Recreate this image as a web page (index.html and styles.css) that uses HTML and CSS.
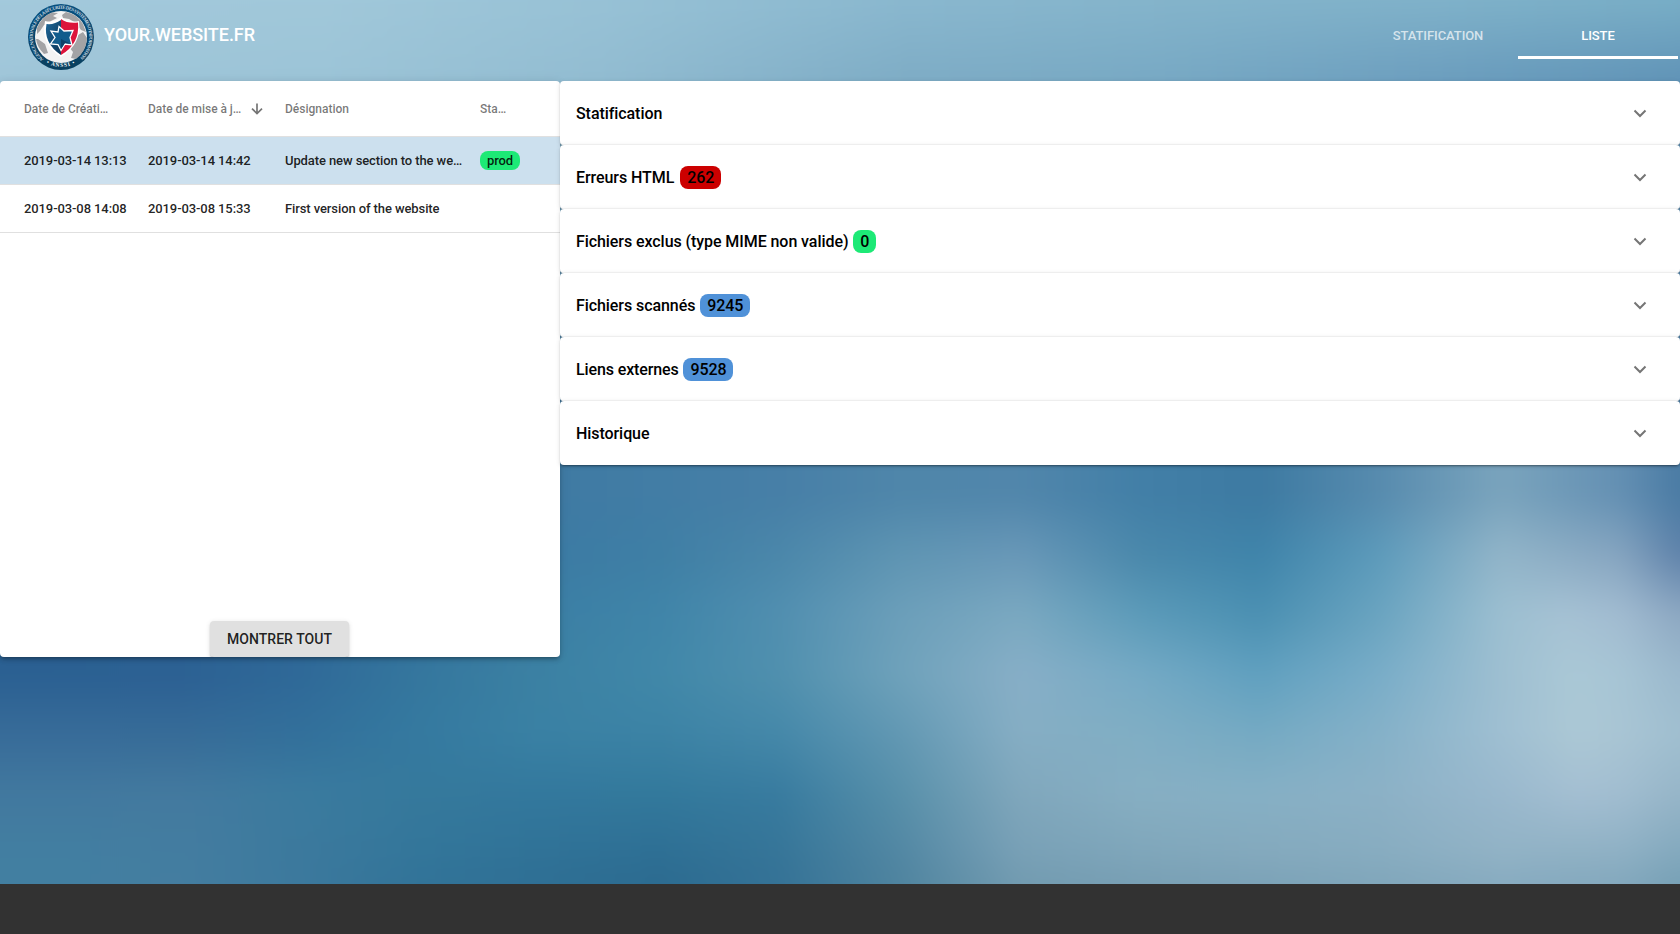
FILE: index.html
```html
<!DOCTYPE html>
<html lang="fr">
<head>
<meta charset="utf-8">
<title>YOUR.WEBSITE.FR</title>
<link rel="stylesheet" href="styles.css">
</head>
<body>
<div class="page">
  <div class="backdrop" aria-hidden="true">
    <div class="band band-0"></div>
    <div class="band band-1"></div>
    <div class="band band-2"></div>
    <div class="band band-3"></div>
    <div class="band band-4"></div>
    <div class="band band-5"></div>
    <div class="band band-6"></div>
    <div class="band band-7"></div>
    <div class="band band-8"></div>
    <div class="band band-9"></div>
  </div>
  <header class="topbar">
    <svg class="logo" viewBox="0 0 66 66" width="66" height="66">
      <defs>
        <path id="ring-top" d="M15.6 55.2A28.2 28.2 0 1 1 50.4 55.2"/>
        <path id="ring-bottom" d="M12 54.6A30.6 30.6 0 0 0 54 54.6"/>
        <linearGradient id="blue" x1="0" y1="0" x2="1" y2="1"><stop offset="0" stop-color="#1d6698"/><stop offset="1" stop-color="#0b3556"/></linearGradient>
        <linearGradient id="ring" x1="0" y1="0" x2="0" y2="1"><stop offset="0" stop-color="#07507e"/><stop offset="1" stop-color="#093f5e"/></linearGradient>
      </defs>
      <circle cx="33" cy="33" r="33" fill="url(#ring)"/>
      <circle cx="33" cy="33" r="26" fill="#f3f3f3"/>
      <path fill="#a3a3a5" d="M9 24Q14 12 24 8.500L30 9 25 12 29 14 23 17 20 21 16 21 12 27 9 30ZM38 8Q49 10 55 20L58 28 53 26 48 19 41 15 35 14 34 11ZM42 36L55 28 59 34Q58 48 48 55L43 54 45 48 41 43ZM10 35L17 40 20 49 16 50Q9 43 8 35Z"/>
      <path fill="#fff" d="M17 17Q26 19 33 13Q40 19 51 17Q54 40 33 53Q12 40 17 17Z"/>
      <path fill="url(#blue)" d="M18.500 20Q26 21 33 16L33 51Q15 39 18.500 20Z"/>
      <path fill="#dc143b" d="M33 15Q40 20 50 18.500Q52 40 33 51Z"/>
      <path fill="#115c8c" stroke="#fff" stroke-width="1.300" d="M31 22.500L36 27 45 26.500 42 33.500 44 41 37 40 33 46.500 30 40.500 22.500 40 27 33.500 23 27 30 28Z"/>
      <path fill="#0d4269" d="M33 35L43 40 37 39 33 45Z"/>
      <text class="logo-text"><textPath href="#ring-top" textLength="137">AGENCE NATIONALE DE LA SÉCURITÉ DES SYSTÈMES D'INFORMATION</textPath></text>
      <text class="logo-text logo-name"><textPath href="#ring-bottom" startOffset="50%" text-anchor="middle">•  ANSSI  •</textPath></text>
    </svg>
    <h1 class="site-title">YOUR.WEBSITE.FR</h1>
    <nav class="tabs">
      <a class="tab">STATIFICATION</a>
      <a class="tab tab-active">LISTE</a>
    </nav>
  </header>
  <main class="content">
    <section class="list-card">
      <div class="row row-head">
        <span class="cell">Date de Créati…</span>
        <span class="cell cell-sorted"><span class="clip">Date de mise à j…</span><svg class="arrow" viewBox="0 0 12 12" width="12" height="12"><path d="M6 .5V10.500M1 5.700L6 10.500L11 5.700"/></svg></span>
        <span class="cell">Désignation</span>
        <span class="cell">Sta…</span>
      </div>
      <div class="row row-selected">
        <span class="cell">2019-03-14 13:13</span>
        <span class="cell">2019-03-14 14:42</span>
        <span class="cell">Update new section to the we…</span>
        <span class="cell"><span class="badge green">prod</span></span>
      </div>
      <div class="row">
        <span class="cell">2019-03-08 14:08</span>
        <span class="cell">2019-03-08 15:33</span>
        <span class="cell">First version of the website</span>
        <span class="cell"></span>
      </div>
      <button class="show-all">MONTRER TOUT</button>
    </section>
    <section class="panels">
      <div class="panel"><span>Statification</span><svg class="chevron" viewBox="0 0 14 10"><path d="M1.500 1.500L7 7L12.500 1.500"/></svg></div>
      <div class="panel"><span>Erreurs HTML <span class="badge badge-wide red">262</span></span><svg class="chevron" viewBox="0 0 14 10"><path d="M1.500 1.500L7 7L12.500 1.500"/></svg></div>
      <div class="panel"><span>Fichiers exclus (type MIME non valide) <span class="badge green">0</span></span><svg class="chevron" viewBox="0 0 14 10"><path d="M1.500 1.500L7 7L12.500 1.500"/></svg></div>
      <div class="panel"><span>Fichiers scannés <span class="badge blue">9245</span></span><svg class="chevron" viewBox="0 0 14 10"><path d="M1.500 1.500L7 7L12.500 1.500"/></svg></div>
      <div class="panel"><span class="tight">Liens externes <span class="badge blue">9528</span></span><svg class="chevron" viewBox="0 0 14 10"><path d="M1.500 1.500L7 7L12.500 1.500"/></svg></div>
      <div class="panel"><span>Historique</span><svg class="chevron" viewBox="0 0 14 10"><path d="M1.500 1.500L7 7L12.500 1.500"/></svg></div>
    </section>
  </main>
  <footer class="footer"></footer>
</div>
</body>
</html>
```
FILE: styles.css
```css
* { box-sizing: border-box; }
body { margin: 0; font-family: Roboto, "Liberation Sans", sans-serif; font-weight: 500; overflow: hidden; }
.page { position: relative; height: 934px; display: flex; flex-direction: column; overflow: hidden; }

/* Blurred sky: horizontal gradients, each faded in below the previous one */
.backdrop { position: absolute; inset: -50px -30px; filter: blur(11px); }
.band { position: absolute; inset: 0; }
.band-0 { background: linear-gradient(90deg, #a3c9dc 0%, #a1c8da 20%, #98c2d6 36%, #8ab8cf 54%, #84b4cb 70%, #80b2ca 84%, #78aec6 100%); }
.band-1 { background: linear-gradient(90deg, #a0c6d9 0%, #9cc4d7 20%, #92bcd1 36%, #7eacc5 54%, #78a9c4 68%, #6c9ebe 84%, #5f92b6 100%); mask-image: linear-gradient(transparent 50px, #000 130px); }
.band-2 { background: linear-gradient(90deg, #3f7aa3 33.500%, #427da5 39.700%, #477fa7 46.500%, #4f86aa 53.500%, #5186ab 60.300%, #427fa7 67.300%, #3d7aa2 74.100%, #578bae 81%, #7aa4bd 88%, #6490b3 94.800%, #4a7ba4 98.300%); mask-image: linear-gradient(transparent 130px, #000 510px); }
.band-3 { background: linear-gradient(90deg, #3c7ba4 33.500%, #3f7fa5 39.700%, #4b87aa 46.500%, #5f95b3 53.500%, #6998b8 60.300%, #4a88ab 67.300%, #3f84aa 74.100%, #5d9bbb 81%, #92b5c9 88%, #86a5c0 94.800%, #5f82aa 98.300%); mask-image: linear-gradient(transparent 545px, #000 605px); }
.band-4 { background: linear-gradient(90deg, #2a5f91 0%, #2f6998 19%, #3c80a5 34%, #4085a9 39.700%, #518fb0 46.500%, #6c9fba 53.500%, #7ba9c1 60.300%, #5c9bb9 67.300%, #4b90b2 74.100%, #6aa4c0 81%, #9cbfd1 88%, #a6c2d4 91.500%, #a2bcd1 94.800%, #8da8c2 98.300%); mask-image: linear-gradient(transparent 605px, #000 665px); }
.band-5 { background: linear-gradient(90deg, #2b6092 5.200%, #2c6093 12.100%, #2f6998 19%, #35779e 25.900%, #3c81a3 32.700%, #4188a9 39.700%, #5090ae 46.500%, #6fa2bb 53.500%, #88afc7 60.300%, #75aac5 67.300%, #60a0bf 74.100%, #79adc8 81%, #9ebfd1 88%, #aac8d6 92%, #a7c5d5 94.800%, #9bb9cd 98.300%); mask-image: linear-gradient(transparent 665px, #000 725px); }
.band-6 { background: linear-gradient(90deg, #386c99 5.200%, #376c98 12.100%, #33709b 19%, #357aa0 25.900%, #3a81a4 32.700%, #3c83a5 39.700%, #4588a9 46.500%, #6298b3 53.500%, #86aec4 60.300%, #80aec4 67.300%, #75aac3 74.100%, #85b1c8 81%, #9fbfd2 88%, #acc8d5 92.400%, #a9c5d4 94.800%, #a0bfd0 98.300%); mask-image: linear-gradient(transparent 725px, #000 785px); }
.band-7 { background: linear-gradient(90deg, #42799f 5.200%, #447a9f 12.100%, #3b7b9f 19%, #36799c 25.900%, #33789d 32.700%, #33799c 39.700%, #387b9f 46.500%, #5890aa 53.500%, #80a7bc 60.300%, #87afc3 67.300%, #86b0c5 74.100%, #8cb1c6 81%, #99b8cd 88%, #a4bfd2 92.400%, #a1bdd0 94.800%, #96b5c8 98.300%); mask-image: linear-gradient(transparent 785px, #000 845px); }
.band-8 { background: linear-gradient(90deg, #427fa1 5.200%, #447da0 12.100%, #3c799d 19%, #33769a 25.900%, #307297 32.700%, #2e6f94 39.700%, #367598 46.500%, #5287a3 53.500%, #78a0b6 60.300%, #7fa6ba 67.300%, #84a9bd 74.100%, #87acc0 81%, #91b2c5 88%, #8eb0c4 94.800%, #82a8bd 98.300%); mask-image: linear-gradient(transparent 845px, #000 905px); }
.band-9 { background: linear-gradient(90deg, #427fa1 5.200%, #447da0 12.100%, #3c799d 19%, #327398 25.900%, #2f6f94 32.700%, #2c6b90 39.700%, #357296 46.500%, #4f849f 53.500%, #729bb0 60.300%, #789fb4 67.300%, #7ba2b7 74.100%, #80a6ba 81%, #87abc0 88%, #83a8bd 94.800%, #76a0b5 98.300%); mask-image: linear-gradient(transparent 905px, #000 935px); }

.topbar { position: relative; height: 81px; display: flex; align-items: flex-start; padding: 4px 2px 0 28px; color: #fff; }
.logo { flex: none; }
.logo-text { font-family: "Liberation Serif", serif; font-weight: 700; font-size: 4.800px; fill: #c5d6e0; }
.logo-name { font-size: 5.500px; letter-spacing: .9px; fill: #fff; }
.site-title { margin: 19px 0 0 10px; font-size: 18px; line-height: 24px; font-weight: 500; letter-spacing: -.05px; }
.tabs { margin-left: auto; display: flex; }
.tab { width: 160px; height: 55px; display: flex; align-items: center; justify-content: center; padding-top: 11px; border-bottom: 3px solid transparent; font-size: 13px; letter-spacing: -.08px; color: rgba(255,255,255,.7); }
.tab-active { color: #fff; border-bottom-color: #fff; }

.content { position: relative; flex: 1; display: grid; grid-template-columns: 560px 1fr; align-items: start; }
.list-card { height: 576px; display: flex; flex-direction: column; background: #fff; border-radius: 4px; overflow: hidden; box-shadow: 0 3px 3px -2px rgba(0,0,0,.2), 0 3px 4px 0 rgba(0,0,0,.14), 0 1px 8px 0 rgba(0,0,0,.12); }
.row { display: grid; grid-template-columns: 124px 137px 195px 1fr; align-items: center; height: 48px; padding: 0 24px; border-bottom: 1px solid #e0e0e0; font-size: 13px; letter-spacing: -.1px; color: rgba(0,0,0,.87); }
.row-head { height: 56px; font-size: 12px; letter-spacing: 0; color: rgba(0,0,0,.54); }
.row-selected { background: #cce0ee; }
.cell { white-space: nowrap; line-height: 24px; }
.cell-sorted { display: flex; align-items: center; }
.clip { width: 103px; letter-spacing: -.04px; }
.arrow { flex: none; fill: none; stroke: #757575; stroke-width: 1.700; }
.show-all { margin: auto 211px 0 210px; height: 36px; padding: 0; border: 0; border-radius: 4px; background: #e0e0e0; color: rgba(0,0,0,.87); font: 500 14px/36px Roboto, sans-serif; letter-spacing: .06px; box-shadow: 0 3px 1px -2px rgba(0,0,0,.2), 0 2px 2px 0 rgba(0,0,0,.14), 0 1px 5px 0 rgba(0,0,0,.12); }

.badge { padding: 2px 7px; border-radius: 8px; }
.green { background: #1de976; }
.red { background: #c00; }
.blue { background: #4f91d8; }

.panels { display: flex; flex-direction: column; }
.panel { height: 64px; display: flex; align-items: center; justify-content: space-between; padding: 1px 33px 0 16px; background: #fff; border-radius: 4px; font-size: 16px; letter-spacing: -.07px; color: #000; box-shadow: 0 3px 1px -2px rgba(0,0,0,.2), 0 2px 2px 0 rgba(0,0,0,.14), 0 1px 5px 0 rgba(0,0,0,.12); }
.panel:not(:last-child) { box-shadow: inset 0 -1px #f6f6f6, 0 3px 1px -2px rgba(0,0,0,.2), 0 2px 2px 0 rgba(0,0,0,.14), 0 1px 5px 0 rgba(0,0,0,.12); }
.panel .badge { margin-left: 1px; }
.panel .badge-wide { margin-left: 2px; }
.tight { letter-spacing: -.12px; }
.chevron { width: 14px; height: 10px; fill: none; stroke: #757575; stroke-width: 2; }

.footer { position: relative; height: 50px; background: #323232; }
```
